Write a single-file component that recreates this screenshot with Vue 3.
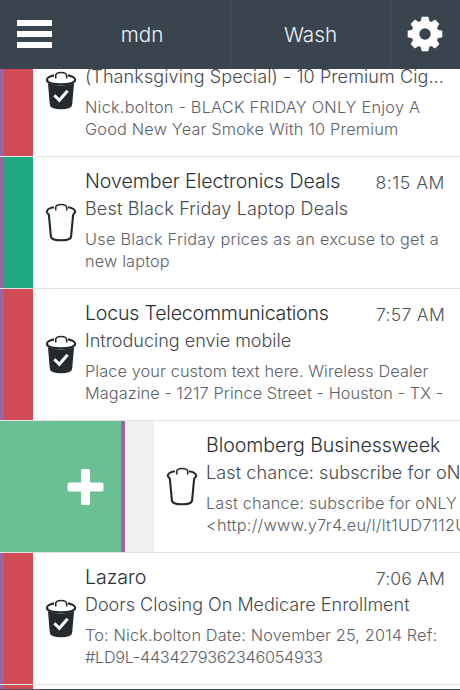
<template>
  <div class="app">
    <header class="navbar">
      <button type="button" class="nav-menu" aria-label="Menu">
        <span class="bar"></span>
        <span class="bar"></span>
        <span class="bar"></span>
      </button>
      <div class="nav-tab first">mdn</div>
      <div class="nav-tab">Wash</div>
      <button type="button" class="nav-settings" aria-label="Settings">
        <svg width="36" height="36" viewBox="-18 -18 36 36">
          <path
            fill="#fff"
            fill-rule="evenodd"
            d="M-3.300 -17.300H3.300L4.300 -12.900L6.300 -12L10.100 -14.400L14.400 -10.100L12 -6.300L12.900 -4.300L17.300 -3.300V3.300L12.900 4.300L12 6.300L14.400 10.100L10.100 14.400L6.300 12L4.300 12.900L3.300 17.300H-3.300L-4.300 12.900L-6.300 12L-10.100 14.400L-14.400 10.100L-12 6.300L-12.900 4.300L-17.300 3.300V-3.300L-12.900 -4.300L-12 -6.300L-14.400 -10.100L-10.100 -14.400L-6.300 -12L-4.300 -12.900ZM0 -5.700A5.700 5.700 0 1 0 0 5.700A5.700 5.700 0 1 0 0 -5.700Z"
          />
        </svg>
      </button>
    </header>

    <main class="list">
      <article
        v-for="mail in mails"
        :key="mail.id"
        class="mail"
        :class="{ swiped: mail.swiped }"
      >
        <div v-if="mail.swiped" class="action">
          <svg width="38" height="38" viewBox="0 0 38 38">
            <rect x="15" y="1" width="9" height="36" rx="1.5" fill="#fff" />
            <rect x="1.5" y="14.5" width="36" height="9" rx="1.5" fill="#fff" />
          </svg>
        </div>
        <div class="strip" :class="mail.color"></div>
        <div class="content">
          <svg class="bin" width="32" height="40" viewBox="0 0 32 40">
            <template v-if="mail.checked">
              <path fill="#23292d" d="M3 12.500Q16 16.500 29 12.500L27.200 33.500Q26.800 38.300 16 38.300Q5.200 38.300 4.800 33.500Z" />
              <path class="line" d="M9 4.400C3.500 5.400 1.600 7.400 1.900 9C2.300 12 8.500 13.300 16 13.300S29.700 12 30.100 9C30.400 7.400 28.500 5.400 23 4.400" />
              <path fill="none" stroke="#fff" stroke-width="3" d="M9.300 24.300L14.300 29.300L22.600 19.800" />
            </template>
            <path
              v-else
              class="line"
              d="M9 4.200C4 5 2 6.700 1.800 8.600C1.800 10.300 3.700 10.500 3.900 12.200L5.900 33.500C6.300 36.300 10 37.300 16 37.300S25.700 36.300 26.100 33.500L28.100 12.200C28.300 10.500 30.200 10.300 30.200 8.600C30 6.700 28 5 23 4.200"
            />
            <path class="handle" d="M10.700 7.500V4.500C10.900 2 13 1.500 16 1.500S21.500 2 21.700 4.500V7.500" />
          </svg>
          <div class="text">
            <h3 class="sender" :style="spacing(mail.sender)">{{ mail.sender.text }}</h3>
            <p class="subject" :style="spacing(mail.subject)">{{ mail.subject.text }}</p>
            <p class="preview">
              <span v-for="line in mail.preview" :key="line.text" :style="spacing(line)">{{ line.text }}</span>
            </p>
          </div>
          <time v-if="mail.time" class="time" :style="spacing(mail.time)">{{ mail.time.text }}</time>
        </div>
      </article>
      <div class="mail next">
        <div class="strip red"></div>
      </div>
    </main>
    <div class="edge"></div>
  </div>
</template>

<script setup>
import { ref } from 'vue'

// track is the letter spacing of a line, in pixels
const mails = ref([
  {
    id: 1,
    sender: { text: '', track: 0 },
    subject: { text: '(Thanksgiving Special) - 10 Premium Cig…', track: 0.1 },
    preview: [
      { text: 'Nick.bolton - BLACK FRIDAY ONLY Enjoy A', track: 0.24 },
      { text: 'Good New Year Smoke With 10 Premium', track: 0.19 }
    ],
    time: null,
    color: 'red',
    checked: true
  },
  {
    id: 2,
    sender: { text: 'November Electronics Deals', track: -0.08 },
    subject: { text: 'Best Black Friday Laptop Deals', track: 0.17 },
    preview: [
      { text: 'Use Black Friday prices as an excuse to get a', track: 0.26 },
      { text: 'new laptop', track: 0.15 }
    ],
    time: { text: '8:15 AM', track: 0.55 },
    color: 'green',
    checked: false
  },
  {
    id: 3,
    sender: { text: 'Locus Telecommunications', track: -0.22 },
    subject: { text: 'Introducing envie mobile', track: 0 },
    preview: [
      { text: 'Place your custom text here. Wireless Dealer', track: 0.11 },
      { text: 'Magazine - 1217 Prince Street - Houston - TX -', track: 0.09 }
    ],
    time: { text: '7:57 AM', track: 0.27 },
    color: 'red',
    checked: true
  },
  {
    id: 4,
    sender: { text: 'Bloomberg Businessweek', track: -0.06 },
    subject: { text: 'Last chance: subscribe for oNLY', track: 0.12 },
    preview: [
      { text: 'Last chance: subscribe for oNLY', track: 0.15 },
      { text: '<http://www.y7r4.eu/l/lt1UD7112U', track: 0.28 }
    ],
    time: null,
    color: 'grey',
    checked: false,
    swiped: true
  },
  {
    id: 5,
    sender: { text: 'Lazaro', track: -0.05 },
    subject: { text: 'Doors Closing On Medicare Enrollment', track: 0 },
    preview: [
      { text: 'To: Nick.bolton Date: November 25, 2014 Ref:', track: 0.15 },
      { text: '#LD9L-4434279362346054933', track: -0.3 }
    ],
    time: { text: '7:06 AM', track: 0.13 },
    color: 'red',
    checked: true
  }
])

const spacing = (line) => ({ letterSpacing: line.track + 'px' })
</script>

<style>
body {
  background: #fff;
}
</style>

<style scoped>
.app {
  position: relative;
  display: flex;
  flex-direction: column;
  width: 460px;
  height: 690px;
  overflow: hidden;
  background: #fff;
  font-family: Inter, "Liberation Sans", sans-serif;
  font-weight: 300;
}

.navbar {
  display: flex;
  flex: none;
  height: 69px;
  background: #39444f;
}

.navbar button {
  border: none;
  background: none;
  padding: 0;
}

.nav-menu {
  display: flex;
  flex-direction: column;
  gap: 5px;
  width: 54px;
}

.navbar .nav-menu {
  padding: 20px 2px 0 17px;
}

.bar {
  width: 35px;
  height: 6px;
  background: #fff;
}

.nav-tab {
  flex: none;
  box-sizing: border-box;
  width: 160px;
  line-height: 70px;
  text-align: center;
  font-size: 20.7px;
  color: #eef3f7;
  border-right: 1px solid #46525e;
}

.nav-tab.first {
  width: 177px;
}

.navbar .nav-settings {
  display: flex;
  align-items: center;
  justify-content: center;
  width: 69px;
  padding: 0 1px 1px 0;
}

.list {
  flex: 1;
  min-height: 0;
  overflow: hidden;
}

.mail {
  display: flex;
  height: 131px;
  border-bottom: 1px solid #e2e5e7;
}

.mail:first-child {
  margin-top: -44px;
}

.strip {
  flex: none;
  box-sizing: border-box;
  width: 33px;
  border-left: 4px solid #9b65a3;
}

.strip.red {
  background: #d24a54;
}

.strip.green {
  background: #20a981;
}

.strip.grey {
  background: #f0f0f0;
}

.action {
  display: flex;
  flex: none;
  align-items: center;
  justify-content: flex-end;
  box-sizing: border-box;
  width: 121px;
  padding-right: 17px;
  background: #6bbf94;
}

.content {
  display: flex;
  flex: none;
  box-sizing: border-box;
  width: 427px;
  padding: 11px 15px 0 12px;
}

.bin {
  flex: none;
  margin: 35px 8px 0 0;
}

.line,
.handle {
  fill: none;
  stroke: #23292d;
  stroke-width: 2.1;
}

.handle {
  stroke-width: 1.6;
}

.text {
  flex: 1;
  min-width: 0;
  white-space: nowrap;
}

.sender,
.subject,
.preview {
  margin: 0;
  font-weight: 300;
}

.sender {
  height: 27px;
  line-height: 27px;
  font-size: 19.6px;
  color: #2b3035;
}

.subject {
  height: 28px;
  line-height: 28px;
  font-size: 18px;
  color: #454a50;
}

.preview {
  padding-top: 6px;
  line-height: 21.5px;
  font-size: 16.3px;
  color: #5d6168;
}

.preview span {
  display: block;
}

.time {
  flex: none;
  line-height: 30px;
  font-size: 17.6px;
  color: #4c5258;
}

.next {
  height: 5px;
}

.edge {
  position: absolute;
  left: 0;
  right: 0;
  bottom: 0;
  height: 1px;
  background: #4a535c;
}
</style>
